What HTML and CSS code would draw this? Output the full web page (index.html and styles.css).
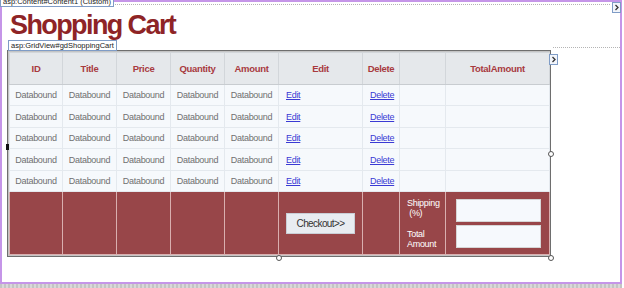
FILE: index.html
```html
<!DOCTYPE html>
<html>
<head>
    <title>Shopping Cart</title>
    <link rel="stylesheet" href="styles.css">
</head>
<body>
    <div class="frame">
        <span class="tag tag-top">asp:Content#Content1 (Custom)</span>
        <span class="smart smart-top"><svg width="6" height="7" viewBox="0 0 6 7"><polyline points="1.5,1 4,3.5 1.5,6" fill="none" stroke="#333" stroke-width="1.3"/></svg></span>
        <div class="dots"></div>
        <h1>Shopping Cart</h1>
        <div class="grid-area">
            <span class="tag tag-grid">asp:GridView#gdShoppingCart</span>
            <span class="smart smart-grid"><svg width="6" height="7" viewBox="0 0 6 7"><polyline points="1.5,1 4,3.5 1.5,6" fill="none" stroke="#333" stroke-width="1.3"/></svg></span>
            <div class="guide"></div>
            <div class="grid">
                <table>
                    <tr class="head">
                        <th class="c-id">ID</th>
                        <th class="c-std">Title</th>
                        <th class="c-std">Price</th>
                        <th class="c-std">Quantity</th>
                        <th class="c-std">Amount</th>
                        <th class="c-edit">Edit</th>
                        <th class="c-del">Delete</th>
                        <th class="c-blank"></th>
                        <th class="c-total">TotalAmount</th>
                    </tr>
                    <tr class="row">
                        <td>Databound</td><td>Databound</td><td>Databound</td><td>Databound</td><td>Databound</td>
                        <td class="link"><a href="#">Edit</a></td><td class="link"><a href="#">Delete</a></td><td></td><td></td>
                    </tr>
                    <tr class="row">
                        <td>Databound</td><td>Databound</td><td>Databound</td><td>Databound</td><td>Databound</td>
                        <td class="link"><a href="#">Edit</a></td><td class="link"><a href="#">Delete</a></td><td></td><td></td>
                    </tr>
                    <tr class="row">
                        <td>Databound</td><td>Databound</td><td>Databound</td><td>Databound</td><td>Databound</td>
                        <td class="link"><a href="#">Edit</a></td><td class="link"><a href="#">Delete</a></td><td></td><td></td>
                    </tr>
                    <tr class="row">
                        <td>Databound</td><td>Databound</td><td>Databound</td><td>Databound</td><td>Databound</td>
                        <td class="link"><a href="#">Edit</a></td><td class="link"><a href="#">Delete</a></td><td></td><td></td>
                    </tr>
                    <tr class="row">
                        <td>Databound</td><td>Databound</td><td>Databound</td><td>Databound</td><td>Databound</td>
                        <td class="link"><a href="#">Edit</a></td><td class="link"><a href="#">Delete</a></td><td></td><td></td>
                    </tr>
                    <tr class="foot">
                        <td></td><td></td><td></td><td></td><td></td>
                        <td class="link"><button>Checkout&gt;&gt;</button></td>
                        <td></td>
                        <td class="labels">
                            <div class="lbl">Shipping<br>&nbsp;(%)</div>
                            <div class="lbl">Total<br>Amount</div>
                        </td>
                        <td class="boxes">
                            <input type="text">
                            <input type="text">
                        </td>
                    </tr>
                </table>
            </div>
            <span class="handle h-left"></span>
            <span class="handle h-right"></span>
            <span class="handle h-corner"></span>
            <span class="handle h-bottom"></span>
        </div>
    </div>
    <div class="status"></div>
</body>
</html>
```

FILE: styles.css
```css
body {
    margin: 0;
    background-color: #fff;
    font-family: "Liberation Sans", Arial, sans-serif;
}
.frame {
    position: relative;
    width: 618px;
    height: 280px;
    border: 2px solid #c595e8;
}
.status {
    width: 622px;
    height: 4px;
    background: repeating-linear-gradient(90deg, #c4c4c4 0, #c4c4c4 2px, #d8d8d8 2px, #d8d8d8 4px);
}
.dots {
    margin: 2px 10px 0 0;
    border-top: 1px dotted #b4b4b4;
}
h1 {
    margin: 5px 0 10px 8px;
    font-size: 27px;
    line-height: 30px;
    letter-spacing: -1.6px;
    color: #8e2426;
}
.tag {
    position: absolute;
    font-size: 7.5px;
    line-height: 9px;
    padding: 0 2px;
    background-color: #fff;
    border: 1px solid #7f9cc6;
    color: #222;
    white-space: nowrap;
}
.tag-top {
    top: -6px;
    left: -2px;
}
.tag-grid {
    top: -10px;
    left: 1px;
    z-index: 2;
}
.smart {
    position: absolute;
    width: 7px;
    height: 9px;
    border: 1px solid #7f9cc6;
    background-color: #f2f5fb;
    display: flex;
    align-items: center;
    justify-content: center;
}
.smart-top {
    top: 0;
    right: -1px;
}
.smart-grid {
    top: 4px;
    left: 542px;
}
.guide {
    position: absolute;
    top: -3px;
    left: 546px;
    width: 67px;
    border-top: 1px dotted #b4b4b4;
}
.grid-area {
    position: relative;
    margin-left: 5px;
    width: 544px;
}
.grid {
    border: 1px solid #6e6e6e;
    box-shadow: inset 0 0 0 1px #c4c4c4;
    padding: 1px;
}
table {
    border-collapse: collapse;
    width: 540px;
    table-layout: fixed;
}
th, td {
    box-sizing: border-box;
    padding: 0;
    text-align: center;
    overflow: hidden;
}
.c-id { width: 53px; }
.c-std { width: 54px; }
.c-edit { width: 84px; }
.c-del { width: 37px; }
.c-blank { width: 46px; }
.c-total { width: 104px; }
.head th {
    height: 32px;
    background-color: #e5e8eb;
    border: 1px solid #d2d6da;
    border-bottom-color: #c8ccd0;
    color: #a83a3e;
    font-size: 9.5px;
    letter-spacing: -0.3px;
}
.row td {
    height: 21px;
    background-color: #f6f9fc;
    border: 1px solid #e4e9ee;
    color: #707070;
    font-size: 9px;
    letter-spacing: -0.3px;
}
.row:nth-child(odd) td {
    height: 22px;
}
td.link {
    text-align: left;
    padding-left: 7px;
}
a {
    color: #3a3ad4;
    font-size: 9px;
}
.foot td {
    height: 63px;
    background-color: #984649;
    border: 1px solid #d9afaf;
}
button {
    width: 69px;
    height: 21px;
    padding: 0;
    background-color: #e8ecf1;
    border: 1px solid #c9ced6;
    font-family: "Liberation Sans", Arial, sans-serif;
    font-size: 10px;
    letter-spacing: -0.6px;
    color: #333;
}
td.labels {
    text-align: left;
    padding-left: 7px;
    vertical-align: top;
}
.lbl {
    color: #fff;
    font-size: 9px;
    line-height: 10px;
    letter-spacing: -0.3px;
}
.lbl + .lbl {
    margin-top: 11px;
}
.labels .lbl:first-child {
    margin-top: 6px;
}
td.boxes {
    text-align: left;
    padding-left: 10px;
}
input {
    display: block;
    box-sizing: border-box;
    width: 85px;
    height: 23px;
    margin: 0;
    border: 1px solid #d6d6d6;
    background-color: #f6f9fd;
}
input + input {
    margin-top: 3px;
}
.handle {
    position: absolute;
    box-sizing: border-box;
    width: 6px;
    height: 6px;
    border: 1px solid #555;
    border-radius: 50%;
    background-color: #fff;
}
.h-left {
    left: -1px;
    top: 94px;
    width: 3px;
    height: 6px;
    border-radius: 0;
    background-color: #111;
    border: 0;
}
.h-right {
    left: 541px;
    top: 101px;
}
.h-corner {
    left: 541px;
    top: 205px;
}
.h-bottom {
    left: 269px;
    top: 205px;
}
```
